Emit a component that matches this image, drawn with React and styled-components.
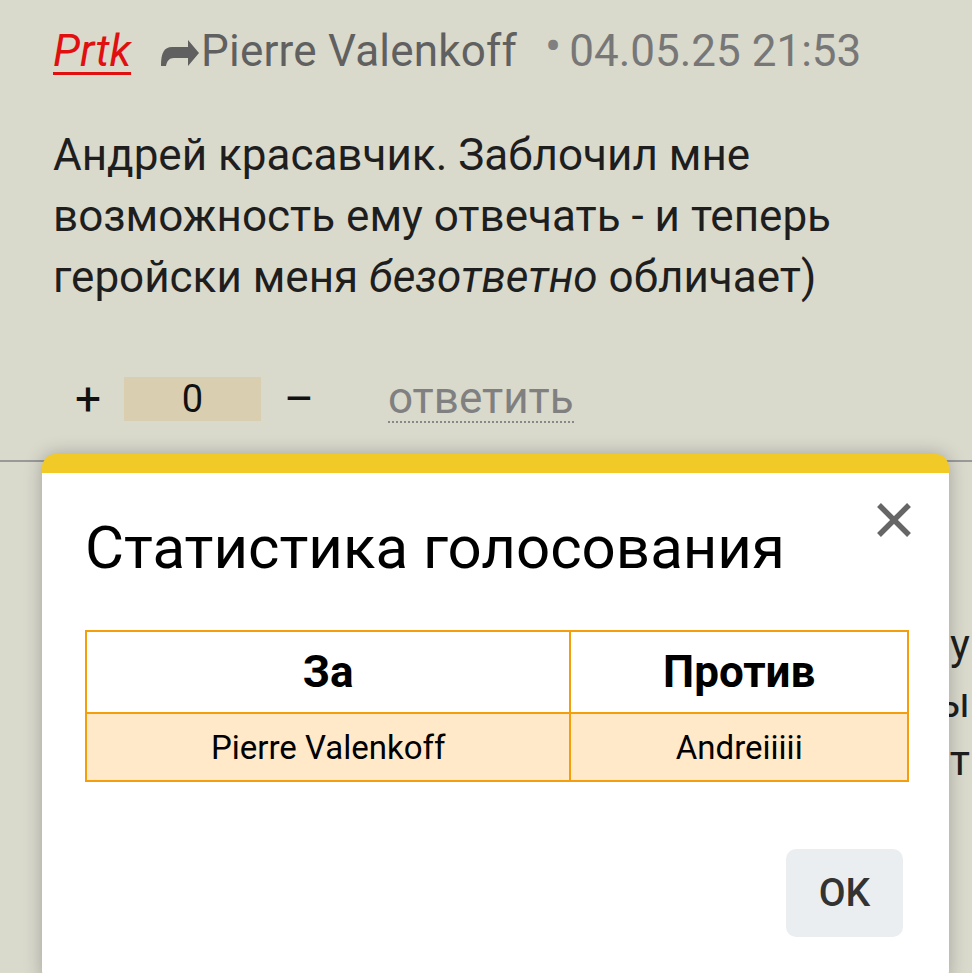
import styled, { createGlobalStyle } from "styled-components";

const GlobalStyle = createGlobalStyle`
  html, body {
    margin: 0;
    padding: 0;
    background: #d9d9cc;
    overflow: hidden;
  }
  body {
    font-family: Roboto, "Noto Sans", sans-serif;
    color: #222;
  }
`;

const Page = styled.div`
  position: relative;
  width: 972px;
  height: 973px;
  overflow: hidden;
`;

const Comment = styled.div`
  padding: 24px 0 0 53px;
`;

const Meta = styled.div`
  display: flex;
  align-items: baseline;
  font-size: 44px;
  line-height: 52px;
`;

const Author = styled.a`
  color: #e01010;
  font-style: italic;
  text-decoration: underline;
  text-decoration-thickness: 3px;
  text-underline-offset: 6px;
  margin-right: 29px;
`;

const ReplyTo = styled.span`
  display: flex;
  align-items: center;
  color: #606060;
  align-self: center;
  letter-spacing: 0.2px;
`;

const Arrow = styled.svg`
  width: 40px;
  height: 28px;
  margin: 5px 1px 0 0;
`;

const Dot = styled.span`
  color: #808080;
  font-size: 48px;
  margin: 0 8px 0 28px;
  position: relative;
  top: -3px;
`;

const Date = styled.span`
  color: #777;
`;

const Text = styled.p`
  margin: 48px 0 0;
  font-size: 44px;
  line-height: 61px;
  color: #1e1e1e;
  width: 880px;
`;

const Votes = styled.div`
  display: flex;
  align-items: center;
  margin: 68px 0 0 22px;
  height: 46px;
`;

const VoteSign = styled.span`
  font-size: 46px;
  font-weight: 400;
  color: #111;
  width: ${(p) => p.w}px;
  text-align: center;
`;

const Score = styled.span`
  width: 137px;
  height: 44px;
  background: #d9cfb0;
  display: flex;
  align-items: center;
  justify-content: center;
  font-size: 38px;
  color: #111;
  margin: 0 23px 0 23px;
`;

const Reply = styled.a`
  margin-left: 79px;
  font-size: 44px;
  color: #808080;
  border-bottom: 2px dotted #888;
  line-height: 46px;
`;

const Divider = styled.div`
  margin-top: 38px;
  border-top: 2px solid #999;
`;

const NextComment = styled.div`
  margin: 154px 2px 0 53px;
  overflow: hidden;
  font-size: 42px;
  line-height: 58px;
  color: #1e1e1e;
`;

const NextLine = styled.div`
  display: flex;
  justify-content: flex-end;
  white-space: nowrap;
`;

const Modal = styled.div`
  position: absolute;
  left: 42px;
  top: 454px;
  width: 907px;
  height: 530px;
  background: #fff;
  border-radius: 14px;
  border-top: 19px solid #f2ca27;
  box-shadow: 0 0 18px rgba(0, 0, 0, 0.25);
  box-sizing: border-box;
  padding: 0 46px 0 43px;
`;

const Close = styled.button`
  position: absolute;
  right: 37px;
  top: 29px;
  width: 36px;
  height: 36px;
  border: none;
  background: none;
  padding: 0;
  cursor: pointer;
`;

const Title = styled.h2`
  margin: 40px 0 0;
  font-size: 60px;
  font-weight: 400;
  line-height: 70px;
  color: #000;
`;

const Table = styled.table`
  margin-top: 47px;
  width: 824px;
  border-collapse: collapse;
`;

const Th = styled.th`
  border: 2px solid #f59e0b;
  height: 78px;
  font-size: 44px;
  font-weight: 700;
  color: #000;
  width: ${(p) => p.w}px;
`;

const Td = styled.td`
  border: 2px solid #f59e0b;
  background: #ffe9c9;
  height: 64px;
  text-align: center;
  font-size: 33px;
  color: #000;
`;

const Footer = styled.div`
  display: flex;
  justify-content: flex-end;
  margin-top: 67px;
`;

const OkButton = styled.button`
  width: 117px;
  height: 88px;
  background: #ebeef0;
  border: none;
  border-radius: 10px;
  font-family: Roboto, sans-serif;
  font-size: 39px;
  font-weight: 500;
  color: #333;
  cursor: pointer;
`;

export default function App() {
  return (
    <Page>
      <GlobalStyle />
      <Comment>
        <Meta>
          <Author href="#">Prtk</Author>
          <ReplyTo>
            <Arrow viewBox="0 0 40 28">
              <path
                d="M1 27 C1 14 4 8 12 8 H28 V1 L39 14 L28 27 V19 H14 C9 19 7 22 6 27 Z"
                fill="#606060"
              />
            </Arrow>
            Pierre Valenkoff
          </ReplyTo>
          <Dot>•</Dot>
          <Date>04.05.25 21:53</Date>
        </Meta>
        <Text>
          Андрей красавчик. Заблочил мне возможность ему отвечать - и теперь
          геройски меня <i>безответно</i> обличает)
        </Text>
        <Votes>
          <VoteSign w={26}>+</VoteSign>
          <Score>0</Score>
          <VoteSign w={25}>–</VoteSign>
          <Reply>ответить</Reply>
        </Votes>
      </Comment>
      <Divider />
      <NextComment>
        <NextLine>и всё это было бы смешно, если бы не было так грустно у</NextLine>
        <NextLine>но сказать что-то в ответ мы</NextLine>
        <NextLine>и больше ничего не скажет</NextLine>
      </NextComment>
      <Modal>
        <Close aria-label="Закрыть">
          <svg viewBox="0 0 36 36" width="36" height="36">
            <path d="M3 3 L33 33 M33 3 L3 33" stroke="#666" strokeWidth="5.5" />
          </svg>
        </Close>
        <Title>Статистика голосования</Title>
        <Table>
          <thead>
            <tr>
              <Th w={487}>За</Th>
              <Th w={337}>Против</Th>
            </tr>
          </thead>
          <tbody>
            <tr>
              <Td>Pierre Valenkoff</Td>
              <Td>Andreiiiii</Td>
            </tr>
          </tbody>
        </Table>
        <Footer>
          <OkButton>OK</OkButton>
        </Footer>
      </Modal>
    </Page>
  );
}
